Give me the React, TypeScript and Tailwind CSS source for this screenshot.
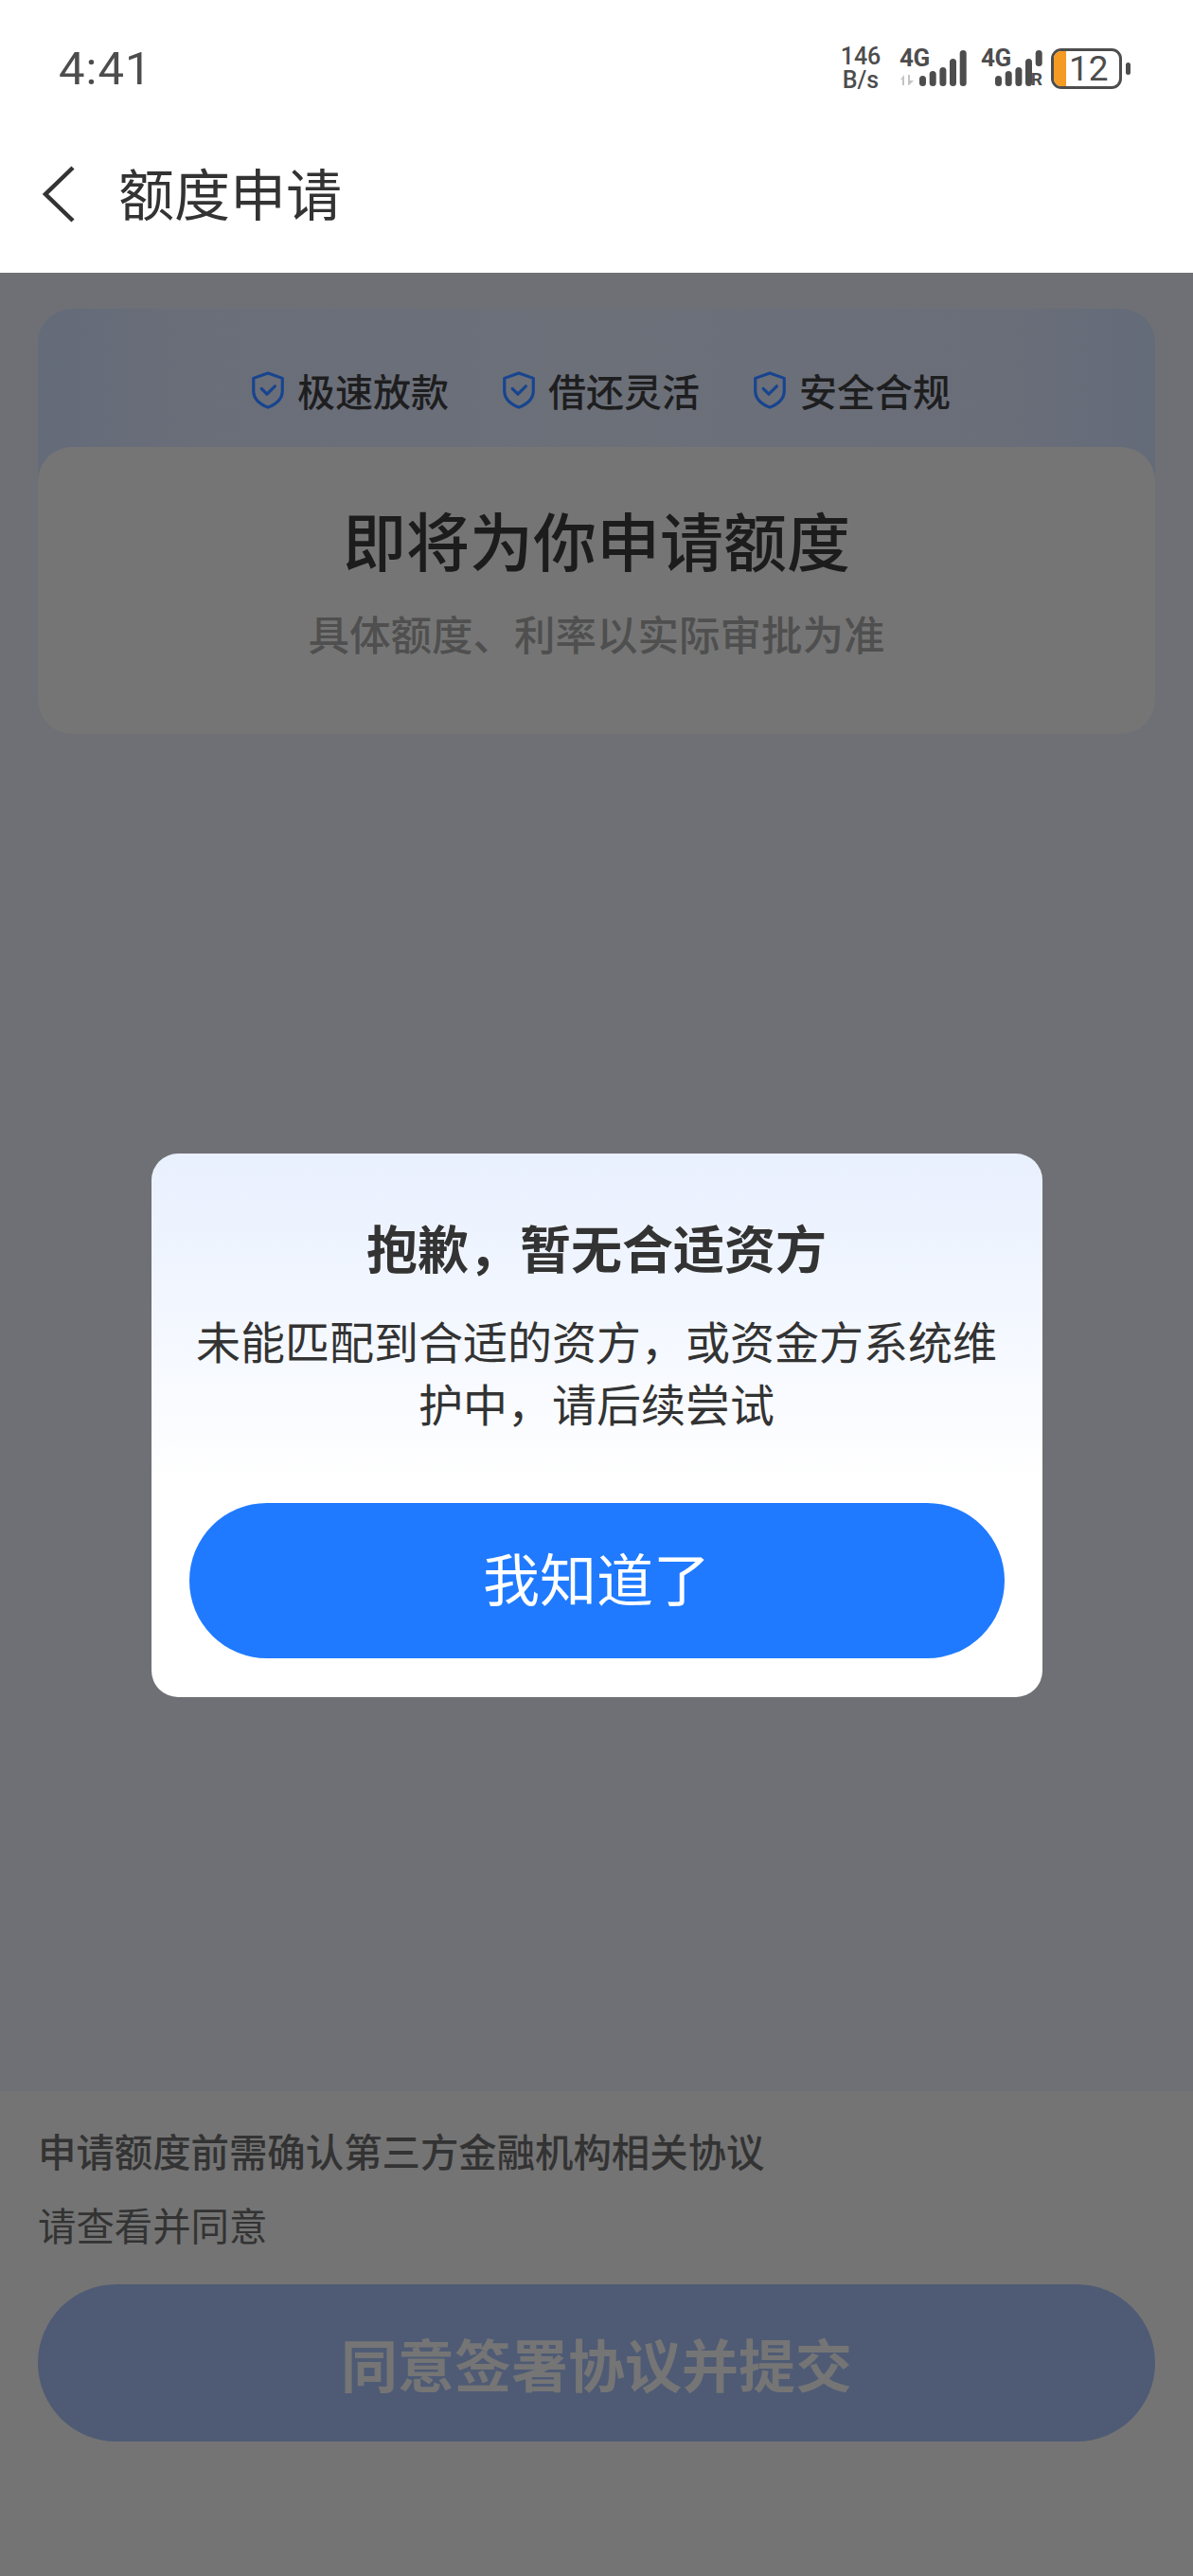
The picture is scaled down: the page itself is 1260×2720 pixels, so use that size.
const cjk = "font-['Noto_Sans_CJK_SC','Noto_Sans',sans-serif]";

// Shield with a tick, used by the three selling points
function ShieldIcon() {
  return (
    <svg width="36" height="40" viewBox="0 0 33 38" fill="none" className="shrink-0">
      <path d="M16.5 1.8 L31 7 V19.5 C31 27.5 25 33 16.5 36.2 C8 33 2 27.5 2 19.5 V7 Z" stroke="#17448f" strokeWidth="3" strokeLinejoin="round" />
      <path d="M10 17.5 L15.5 23 L23.5 15" stroke="#17448f" strokeWidth="3" strokeLinecap="round" strokeLinejoin="round" />
    </svg>
  );
}

function Feature({ label }: { label: string }) {
  return (
    <div className="flex items-center gap-[13px]">
      <ShieldIcon />
      <span className="text-[40px] leading-[48px] font-medium text-[#1e1e1f]">{label}</span>
    </div>
  );
}

function SignalBars({ tall }: { tall: boolean }) {
  const bars = [
    { x: 0, h: 11 },
    { x: 10.7, h: 16 },
    { x: 21.4, h: 20 },
    { x: 32, h: 29 },
  ];
  return (
    <svg width="50" height="40" viewBox="0 0 50 40" fill="#4d4d4d">
      {bars.map((b) => (
        <rect key={b.x} x={b.x} y={39 - b.h} width="7" height={b.h} rx="3.5" />
      ))}
      {tall ? <rect x="42.7" y="1" width="7" height="38" rx="3.5" /> : <rect x="42.7" y="1" width="7" height="17" rx="3.5" />}
    </svg>
  );
}

function StatusBar() {
  return (
    <div className="h-[122px] pt-[22px] pl-[62px] pr-[66px] flex justify-between bg-white">
      <div className="h-[100px] flex items-center text-[49px] leading-none tracking-[1px] text-[#4d4d4d] font-['Roboto',sans-serif]">4:41</div>
      <div className="h-[100px] flex items-center text-[#4d4d4d] font-['Roboto',sans-serif]">
        <div className="w-[48px] flex flex-col items-center text-[25px] leading-[25px] font-medium">
          <span>146</span>
          <span>B/s</span>
        </div>
        {/* first SIM */}
        <div className="relative ml-[17px] w-[71px] h-[40px] flex justify-end">
          <SignalBars tall />
          <span className="absolute left-0 top-[-4px] text-[26px] leading-[26px] font-bold tracking-[-0.5px]">4G</span>
          <svg className="absolute left-0 bottom-[2px]" width="17" height="11" viewBox="0 0 17 11" fill="#c4c4c4">
            <path d="M1 5 L5 0 V11 H3 V5 Z" />
            <path d="M9 0 H11 V6 H15 L10 11 L9 11 Z" />
          </svg>
        </div>
        {/* second SIM */}
        <div className="relative ml-[15px] w-[62px] h-[40px] flex justify-end">
          <div className="mr-[-3px]"><SignalBars tall={false} /></div>
          <span className="absolute left-0 top-[-4px] text-[26px] leading-[26px] font-bold tracking-[-0.5px]">4G</span>
          <span className="absolute right-[-3px] bottom-0 text-[19px] leading-[16px] font-bold">R</span>
        </div>
        {/* battery */}
        <div className="relative ml-[12px] w-[75px] h-[43px] rounded-[11px] border-[3px] border-[#4d4d4d] overflow-hidden flex items-center">
          <div className="w-[13px] h-full bg-[#f59a23]" />
          <span className="ml-[3px] text-[37px] leading-[37px]">12</span>
        </div>
        <div className="ml-[4px] w-[5px] h-[13px] rounded-full bg-[#4d4d4d]" />
      </div>
    </div>
  );
}

export default function App() {
  return (
    <div className={`relative w-[1260px] h-[2720px] flex flex-col bg-[#6f7075] overflow-hidden ${cjk}`}>
      <StatusBar />

      {/* Nav */}
      <div className="h-[166px] pl-[44px] flex items-center bg-white">
        <svg width="36" height="60" viewBox="0 0 36 60" fill="none">
          <path d="M33 2 L4 30 L33 58" stroke="#333333" strokeWidth="4.5" />
        </svg>
        <h1 className="ml-[45px] text-[59px] leading-[70px] pb-[4px] text-[#333333]">额度申请</h1>
      </div>

      {/* Content */}
      <div className="flex-1 px-[40px] pt-[38px]">
        <div className="rounded-[36px] bg-[linear-gradient(90deg,#646b79,#6a6e79_14%,#6c7079_50%,#6a6e79_86%,#646b79)]">
          <div className="h-[146px] pt-[26px] pl-[9px] flex items-center justify-center gap-[56px]">
            <Feature label="极速放款" />
            <Feature label="借还灵活" />
            <Feature label="安全合规" />
          </div>
          <div className="h-[303px] pt-[57px] rounded-[36px] bg-[#757575] flex flex-col items-center">
            <div className="text-[67px] leading-[80px] font-medium text-[#1c1c1c]">即将为你申请额度</div>
            <div className="mt-[30px] text-[43.5px] leading-[60px] font-medium text-[#4f4f4f]">具体额度、利率以实际审批为准</div>
          </div>
        </div>
      </div>

      {/* Bottom */}
      <div className="h-[512px] pt-[25px] px-[40px] bg-[#747474]">
        <p className="text-[40.4px] leading-[76px] font-medium text-[#333333]">申请额度前需确认第三方金融机构相关协议</p>
        <p className="mt-[2px] text-[40.4px] leading-[76px] text-[#333333]">请查看并同意</p>
        <button className="mt-[25px] w-full h-[166px] rounded-full bg-[#4f5b75] text-[60px] font-bold text-[#757575]">同意签署协议并提交</button>
      </div>

      {/* Dialog */}
      <div className="absolute left-0 right-0 top-[290px] bottom-0 flex items-center justify-center">
        <div className="w-[941px] h-[574px] pt-[64px] px-[40px] rounded-[28px] bg-[linear-gradient(180deg,#e9f0fe_0%,#f1f6ff_25%,#fbfcff_50%,#ffffff_60%)] flex flex-col items-center">
          <h2 className="text-[54px] leading-[70px] font-bold text-[#333333]">抱歉，暂无合适资方</h2>
          <p className="mt-[30px] w-full text-center text-[47px] leading-[66px] text-[#333333]">未能匹配到合适的资方，或资金方系统维护中，请后续尝试</p>
          <button className="mt-[73px] w-[861px] h-[164px] shrink-0 pb-[8px] rounded-full bg-[#1f7aff] text-[60px] text-white">我知道了</button>
        </div>
      </div>
    </div>
  );
}
